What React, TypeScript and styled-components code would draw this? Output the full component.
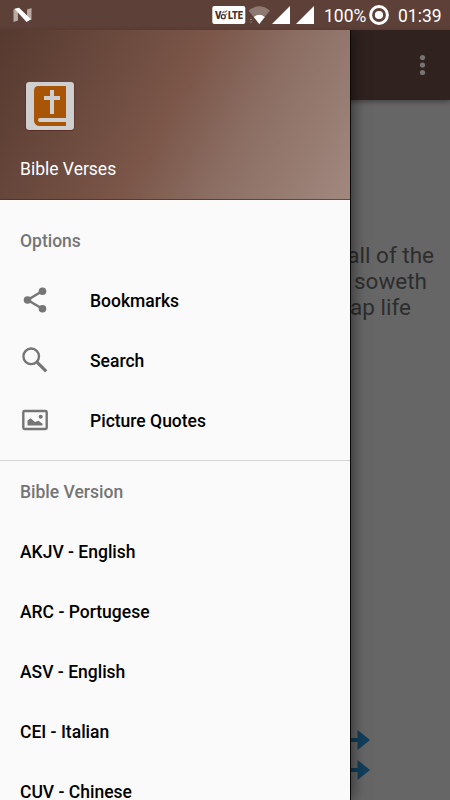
import React from "react";
import styled, { createGlobalStyle } from "styled-components";

const GlobalStyle = createGlobalStyle`
  * { box-sizing: border-box; }
  body { margin: 0; overflow: hidden; font-family: Roboto, sans-serif; }
  svg { display: block; flex: none; }
`;

const Screen = styled.div`
  position: relative;
  width: 450px;
  height: 800px;
  overflow: hidden;
  display: flex;
  flex-direction: column;
  background: #666;
`;

const StatusBar = styled.header`
  flex: none;
  height: 30px;
  display: flex;
  align-items: center;
  padding: 0 8px 0 12px;
  background: #5d4037;
  color: #fff;
`;

const StatusIcons = styled.div`
  display: flex;
  align-items: center;
  margin-left: auto;
`;

const StatusText = styled.span<{ $width: number; $gap: number }>`
  width: ${(p) => p.$width}px;
  margin-left: ${(p) => p.$gap}px;
  font-size: 17.5px;
  line-height: 30px;
  padding-top: 1px;
  white-space: nowrap;
`;

const AppBar = styled.div`
  flex: none;
  height: 70px;
  display: flex;
  align-items: center;
  justify-content: flex-end;
  padding-right: 20px;
  background: #30221e;
  box-shadow: 0 2px 5px rgba(0, 0, 0, 0.35);
`;

const Content = styled.main`
  flex: 1;
  display: flex;
  flex-direction: column;
  justify-content: space-between;
  padding: 142px 0 20px;
`;

const Verse = styled.div`
  color: #2d2d2d;
  font-size: 22.5px;
  line-height: 26px;
  text-align: right;
`;

const VerseLine = styled.div<{ $end: number }>`
  padding-right: ${(p) => p.$end}px;
`;

const Arrows = styled.div`
  display: flex;
  flex-direction: column;
  gap: 10px;
  padding-left: 340px;
`;

const Drawer = styled.aside`
  position: absolute;
  top: 30px;
  left: 0;
  width: 350px;
  height: 770px;
  background: #fafafa;
  box-shadow: 1px 0 0 #080808, 3px 0 14px rgba(0, 0, 0, 0.5);
  clip-path: inset(0 -30px 0 0);
`;

const DrawerHeader = styled.div`
  height: 170px;
  display: flex;
  flex-direction: column;
  padding: 52px 20px 0;
  background: linear-gradient(119deg, #56392f 0%, #7b5649 48%, #8c6e63 68%, #a1887f 100%);
  border-bottom: 1px solid rgba(107, 42, 10, 0.65);
  color: #fff;
`;

const AppName = styled.div`
  margin-top: 15px;
  font-size: 17.5px;
  line-height: 24px;
`;

const SectionTitle = styled.h2`
  margin: 0;
  height: 70px;
  padding: 20px 20px 0;
  color: #757575;
  font-size: 17.5px;
  font-weight: 500;
  line-height: 42px;
`;

const SectionGroup = styled.section<{ $divided?: boolean }>`
  margin-top: ${(p) => (p.$divided ? 10 : 0)}px;
  border-top: ${(p) => (p.$divided ? "1px solid #d5d5d5" : "none")};

  ${SectionTitle} {
    height: ${(p) => (p.$divided ? 60 : 70)}px;
    padding-top: ${(p) => (p.$divided ? 10 : 20)}px;
  }
`;

const MenuItem = styled.div`
  height: 60px;
  display: flex;
  align-items: center;
  gap: 40px;
  padding: 0 20px;
  color: #000;
  font-size: 17.5px;
  font-weight: 500;
  white-space: nowrap;
`;

const MenuLabel = styled.span`
  padding-top: 2px;
`;

const NougatIcon = () => (
  <svg width="22" height="18" viewBox="0 0 22 18">
    <path d="M1.500 3.500L6 2.500v12l-4.500 1.500zM15 3.500l4.500-1.500v11.500L15 15z" fill="#b9aaa5" />
    <path d="M2.500 2.800L7 1.800 19 13.300 14.500 16z" fill="#fff" />
  </svg>
);

const VolteBadge = () => (
  <svg width="34" height="18" viewBox="0 0 34 18">
    <rect x=".3" width="33" height="18" rx="2" fill="#fff" />
    <g fill="#493029" fontFamily="Roboto" fontWeight="900" fontSize="10">
      <text x="3" y="13" textLength="6.500" lengthAdjust="spacingAndGlyphs">V</text>
      <text x="16" y="13" textLength="15" lengthAdjust="spacingAndGlyphs">LTE</text>
    </g>
    <circle cx="11.300" cy="10.700" r="2" fill="none" stroke="#493029" strokeWidth="1.300" />
    <path d="M10.500 7.300q.5-2 2-1.300t2.400-1.600M13 9.500l2-2" fill="none" stroke="#493029" strokeWidth="1" />
  </svg>
);

const WifiIcon = () => (
  <svg width="26" height="18" viewBox="-1 0 26 18">
    <path d="M1.500 4.500Q12.300-4 23 4.500L12.300 18z" fill="#8e7972" />
    <path d="M6.800 11Q12.300 6.500 17.800 11l-5.500 7z" fill="#fff" />
    <path d="M3 14l1-1 1 1M3 15.500l1 1 1-1" fill="none" stroke="#9b8780" />
  </svg>
);

const SignalIcon = () => (
  <svg width="24" height="18" viewBox="0 0 24 18">
    <path d="M18 0v18H0z" fill="#fff" />
  </svg>
);

const BatteryIcon = () => (
  <svg width="20" height="20" viewBox="0 0 20 20" fill="#fff">
    <circle cx="10" cy="10" r="8.400" fill="none" stroke="#fff" strokeWidth="3" />
    <circle cx="10" cy="10" r="4.100" />
  </svg>
);

const MoreIcon = () => (
  <svg width="15" height="22" viewBox="0 0 15 22" fill="#777372">
    <circle cx="7.500" cy="3.500" r="2.600" />
    <circle cx="7.500" cy="11" r="2.600" />
    <circle cx="7.500" cy="18.500" r="2.600" />
  </svg>
);

const BibleIcon = () => (
  <svg width="60" height="60" viewBox="20 82 60 60">
    <rect x="25.500" y="81.800" width="49" height="49" rx="3.500" fill="#4b160e" opacity=".65" />
    <rect x="26" y="82" width="48" height="48" rx="3" fill="#cfcfcf" />
    <path d="M38.500 86H66v40H39.500a5.500 5.500 0 0 1-5.500-5.500V91q0-5 4.500-5z" fill="#a95507" />
    <path d="M50 90h4v6h6v4h-6v14h-4v-14h-6v-4h6zM66 118H40a2 2 0 0 0 0 4h26z" fill="#cfcfcf" />
  </svg>
);

const ShareIcon = () => (
  <svg width="30" height="30" viewBox="0 0 30 30" fill="#757575">
    <path d="M22.500 6L7.500 15l15 8.700" fill="none" stroke="#757575" strokeWidth="2.400" />
    <circle cx="22.500" cy="6.300" r="3.800" />
    <circle cx="7.500" cy="15" r="3.800" />
    <circle cx="22.500" cy="23.700" r="3.800" />
  </svg>
);

const SearchIcon = () => (
  <svg width="30" height="30" viewBox="0 0 30 30" fill="none" stroke="#757575">
    <circle cx="11.200" cy="11.300" r="7.800" strokeWidth="2.400" />
    <path d="M17.200 17.300l9 9" strokeWidth="3.200" />
  </svg>
);

const PictureIcon = () => (
  <svg width="30" height="30" viewBox="0 0 30 30" fill="#757575">
    <rect x="3.300" y="6" width="23.400" height="18" rx="1.200" fill="none" stroke="#757575" strokeWidth="2.400" />
    <circle cx="20.700" cy="11.800" r="2" />
    <path d="M7.500 20.500V15.500l3-2.300 4.500 3.800 3.500-1.200 4 3v1.700z" />
  </svg>
);

const ArrowIcon = () => (
  <svg width="30" height="20" viewBox="0 0 30 20">
    <path d="M0 8h17.500V0L30 10 17.500 20v-8H0z" fill="#113f5c" />
  </svg>
);

const options = [
  { label: "Bookmarks", Icon: ShareIcon },
  { label: "Search", Icon: SearchIcon },
  { label: "Picture Quotes", Icon: PictureIcon },
];

const versions = [
  "AKJV - English",
  "ARC - Portugese",
  "ASV - English",
  "CEI - Italian",
  "CUV - Chinese",
];

export default function App() {
  return (
    <Screen>
      <GlobalStyle />
      <StatusBar>
        <NougatIcon />
        <StatusIcons>
          <VolteBadge />
          <WifiIcon />
          <SignalIcon />
          <SignalIcon />
          <StatusText $width={45} $gap={4}>100%</StatusText>
          <BatteryIcon />
          <StatusText $width={44} $gap={9}>01:39</StatusText>
        </StatusIcons>
      </StatusBar>
      <AppBar>
        <MoreIcon />
      </AppBar>
      <Content>
        <Verse>
          <VerseLine $end={16}>all of the</VerseLine>
          <VerseLine $end={23}>soweth</VerseLine>
          <VerseLine $end={39}>ap life</VerseLine>
        </Verse>
        <Arrows>
          <ArrowIcon />
          <ArrowIcon />
        </Arrows>
      </Content>
      <Drawer>
        <DrawerHeader>
          <BibleIcon />
          <AppName>Bible Verses</AppName>
        </DrawerHeader>
        <SectionGroup>
          <SectionTitle>Options</SectionTitle>
          {options.map(({ label, Icon }) => (
            <MenuItem key={label}>
              <Icon />
              <MenuLabel>{label}</MenuLabel>
            </MenuItem>
          ))}
        </SectionGroup>
        <SectionGroup $divided>
          <SectionTitle>Bible Version</SectionTitle>
          {versions.map((version) => (
            <MenuItem key={version}>
              <MenuLabel>{version}</MenuLabel>
            </MenuItem>
          ))}
        </SectionGroup>
      </Drawer>
    </Screen>
  );
}
